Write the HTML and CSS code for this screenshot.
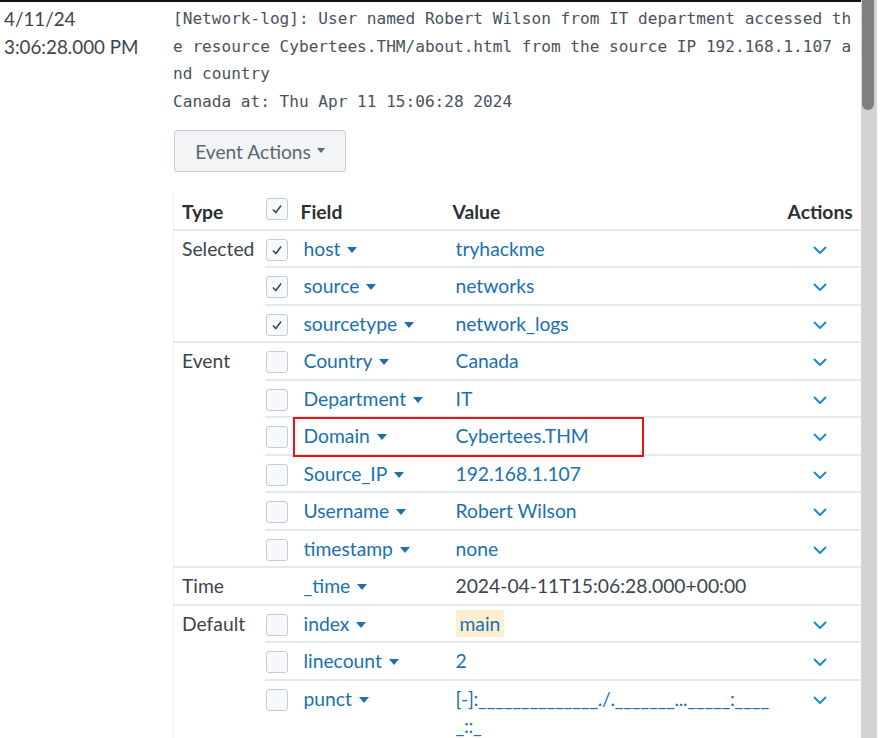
FILE: index.html
```html
<!DOCTYPE html>
<html>
<head>
<meta charset="utf-8">
<link rel="stylesheet" href="styles.css">
</head>
<body>
<div class="page">
  <div class="content">
    <div class="time-col">
      <div>4/11/24</div>
      <div>3:06:28.000 PM</div>
    </div>
    <div class="detail">
      <div class="raw">
        <div class="raw-line">[Network-log]: User named Robert Wilson from IT department accessed th</div>
        <div class="raw-line">e resource Cybertees.THM/about.html from the source IP 192.168.1.107 a</div>
        <div class="raw-line">nd country</div>
        <div class="raw-line">Canada at: Thu Apr 11 15:06:28 2024</div>
      </div>
      <button class="btn">Event Actions <span class="caret dark"></span></button>
      <table class="fields">
        <colgroup>
          <col class="c-type"><col class="c-check"><col class="c-field"><col class="c-value"><col class="c-act">
        </colgroup>
        <thead>
          <tr>
            <th class="type">Type</th>
            <th class="check"><span class="cb checked"><svg viewBox="0 0 12 12"><polyline points="2.5,6.5 5,9 9.5,3"/></svg></span></th>
            <th class="field">Field</th>
            <th class="value">Value</th>
            <th class="act">Actions</th>
          </tr>
        </thead>
        <tbody>
          <tr class="group">
            <td class="type" rowspan="3">Selected</td>
            <td class="check"><span class="cb checked"><svg viewBox="0 0 12 12"><polyline points="2.5,6.5 5,9 9.5,3"/></svg></span></td>
            <td class="field">host<span class="caret"></span></td>
            <td class="value">tryhackme</td>
            <td class="act"><svg class="chev" viewBox="0 0 14 8"><polyline points="1,1 7,7 13,1"/></svg></td>
          </tr>
          <tr>
            <td class="check"><span class="cb checked"><svg viewBox="0 0 12 12"><polyline points="2.5,6.5 5,9 9.5,3"/></svg></span></td>
            <td class="field">source<span class="caret"></span></td>
            <td class="value">networks</td>
            <td class="act"><svg class="chev" viewBox="0 0 14 8"><polyline points="1,1 7,7 13,1"/></svg></td>
          </tr>
          <tr>
            <td class="check"><span class="cb checked"><svg viewBox="0 0 12 12"><polyline points="2.5,6.5 5,9 9.5,3"/></svg></span></td>
            <td class="field">sourcetype<span class="caret"></span></td>
            <td class="value">network_logs</td>
            <td class="act"><svg class="chev" viewBox="0 0 14 8"><polyline points="1,1 7,7 13,1"/></svg></td>
          </tr>
          <tr class="group">
            <td class="type" rowspan="6">Event</td>
            <td class="check"><span class="cb"></span></td>
            <td class="field">Country<span class="caret"></span></td>
            <td class="value">Canada</td>
            <td class="act"><svg class="chev" viewBox="0 0 14 8"><polyline points="1,1 7,7 13,1"/></svg></td>
          </tr>
          <tr>
            <td class="check"><span class="cb"></span></td>
            <td class="field">Department<span class="caret"></span></td>
            <td class="value">IT</td>
            <td class="act"><svg class="chev" viewBox="0 0 14 8"><polyline points="1,1 7,7 13,1"/></svg></td>
          </tr>
          <tr>
            <td class="check"><span class="cb"></span></td>
            <td class="field marked">Domain<span class="caret"></span><span class="redbox"></span></td>
            <td class="value">Cybertees.THM</td>
            <td class="act"><svg class="chev" viewBox="0 0 14 8"><polyline points="1,1 7,7 13,1"/></svg></td>
          </tr>
          <tr>
            <td class="check"><span class="cb"></span></td>
            <td class="field">Source_IP<span class="caret"></span></td>
            <td class="value">192.168.1.107</td>
            <td class="act"><svg class="chev" viewBox="0 0 14 8"><polyline points="1,1 7,7 13,1"/></svg></td>
          </tr>
          <tr>
            <td class="check"><span class="cb"></span></td>
            <td class="field">Username<span class="caret"></span></td>
            <td class="value">Robert Wilson</td>
            <td class="act"><svg class="chev" viewBox="0 0 14 8"><polyline points="1,1 7,7 13,1"/></svg></td>
          </tr>
          <tr>
            <td class="check"><span class="cb"></span></td>
            <td class="field">timestamp<span class="caret"></span></td>
            <td class="value">none</td>
            <td class="act"><svg class="chev" viewBox="0 0 14 8"><polyline points="1,1 7,7 13,1"/></svg></td>
          </tr>
          <tr class="group">
            <td class="type">Time</td>
            <td class="check"></td>
            <td class="field">_time<span class="caret"></span></td>
            <td class="value dark">2024-04-11T15:06:28.000+00:00</td>
            <td class="act"></td>
          </tr>
          <tr class="group">
            <td class="type" rowspan="3">Default</td>
            <td class="check"><span class="cb"></span></td>
            <td class="field">index<span class="caret"></span></td>
            <td class="value"><span class="hl">main</span></td>
            <td class="act"><svg class="chev" viewBox="0 0 14 8"><polyline points="1,1 7,7 13,1"/></svg></td>
          </tr>
          <tr>
            <td class="check"><span class="cb"></span></td>
            <td class="field">linecount<span class="caret"></span></td>
            <td class="value">2</td>
            <td class="act"><svg class="chev" viewBox="0 0 14 8"><polyline points="1,1 7,7 13,1"/></svg></td>
          </tr>
          <tr>
            <td class="check"><span class="cb"></span></td>
            <td class="field">punct<span class="caret"></span></td>
            <td class="value punct"><span class="pl">[-]:______________./._______..._____:____</span><span class="pl">_::_</span></td>
            <td class="act"><svg class="chev" viewBox="0 0 14 8"><polyline points="1,1 7,7 13,1"/></svg></td>
          </tr>
        </tbody>
      </table>
    </div>
  </div>
  <div class="scrollbar"><div class="thumb"></div></div>
</div>
</body>
</html>
```

FILE: styles.css
```css
html, body {
  margin: 0;
  padding: 0;
  background: #fff;
}
body {
  font-family: Lato, "Open Sans", sans-serif;
  color: #3c444d;
  overflow: hidden;
}
.page {
  display: flex;
  width: 880px;
  height: 738px;
  overflow: hidden;
}
.content {
  width: 861px;
  border-top: 2px solid #111;
  display: flex;
  align-items: flex-start;
  box-sizing: border-box;
}
.time-col {
  width: 173px;
  flex: none;
  box-sizing: border-box;
  padding: 3px 0 0 4px;
  font-size: 18.8px;
  line-height: 27.5px;
  color: #3c444d;
}
.detail {
  width: 688px;
  flex: none;
}
.raw {
  font-family: "DejaVu Sans Mono", monospace;
  font-size: 16.1px;
  line-height: 27.5px;
  color: #4a525b;
  padding-top: 3px;
}
.raw-line {
  white-space: pre;
}
.btn {
  margin-top: 15px;
  margin-left: 1px;
  height: 42px;
  width: 172px;
  box-sizing: border-box;
  background: #f2f4f5;
  border: 1px solid #c3cbd4;
  border-radius: 3px;
  font-family: Lato, "Open Sans", sans-serif;
  font-size: 19.2px;
  color: #5c6773;
  padding: 0;
  display: flex;
  align-items: center;
  justify-content: center;
}
.caret {
  display: inline-block;
  width: 0;
  height: 0;
  border-left: 5px solid transparent;
  border-right: 5px solid transparent;
  border-top: 6px solid #1a70b0;
  margin-left: 7px;
  vertical-align: middle;
  position: relative;
  top: -1px;
}
.caret.dark {
  border-left-width: 4.5px;
  border-right-width: 4.5px;
  border-top: 5px solid #5c6773;
  margin-left: 6px;
}
.fields {
  margin-top: 20px;
  border-collapse: collapse;
  table-layout: fixed;
  width: 687px;
  font-size: 19.3px;
  border-left: 1px solid #f0f2f4;
}
.c-type { width: 91px; }
.c-check { width: 31px; }
.c-field { width: 156px; }
.c-value { width: 336px; }
.c-act { width: 73px; }
th, td {
  padding: 4px 0;
  line-height: 27.5px;
  text-align: left;
  vertical-align: top;
}
thead th {
  font-weight: 700;
  color: #2b3033;
  border-bottom: 2px solid #e4e9ed;
  padding-top: 6px;
  padding-bottom: 3px;
}
tbody td {
  border-top: 2px solid #e4e9ed;
  height: 27.5px;
}
tbody tr:first-child td {
  border-top: none;
}
td.type, th.type {
  padding-left: 8px;
}
td.type {
  color: #3c444d;
}
th.check, td.check {
  padding-left: 1px;
}
th.check .cb {
  top: -5px;
}
th.field { padding-left: 5px; }
th.value { padding-left: 1px; }
th.act, td.act {
  text-align: center;
  padding-right: 8px;
}
td.field {
  padding-left: 8px;
  color: #1a70b0;
  position: relative;
}
td.value {
  padding-left: 4px;
  color: #1a70b0;
}
td.value.dark {
  color: #3c444d;
}
.pl {
  display: block;
  white-space: nowrap;
  letter-spacing: -0.3px;
}
.hl {
  background: #fcefd2;
  padding: 0 4px;
  display: inline-block;
}
.cb {
  display: inline-block;
  box-sizing: border-box;
  width: 22px;
  height: 22px;
  border: 1px solid #c3cbd4;
  border-radius: 3px;
  background: #f7f8fa;
  vertical-align: middle;
  position: relative;
  top: -1px;
}
.cb svg {
  width: 14px;
  height: 14px;
  display: block;
  margin: 3px 0 0 3px;
  fill: none;
  stroke: #3c444d;
  stroke-width: 1.3;
}
.chev {
  width: 14px;
  height: 8px;
  fill: none;
  stroke: #1a8ad2;
  stroke-width: 2;
  vertical-align: middle;
  position: relative;
  top: -1px;
}
.redbox {
  position: absolute;
  left: -3px;
  top: -1px;
  width: 351px;
  height: 40px;
  box-sizing: border-box;
  border: 2px solid #ee1111;
  pointer-events: none;
}
.scrollbar {
  width: 16px;
  height: 738px;
  background: #d3d3d3;
  flex: none;
}
.thumb {
  margin-left: 1px;
  width: 12px;
  height: 110px;
  background: #7f7f7f;
  border-radius: 0 0 6px 6px;
}
```
